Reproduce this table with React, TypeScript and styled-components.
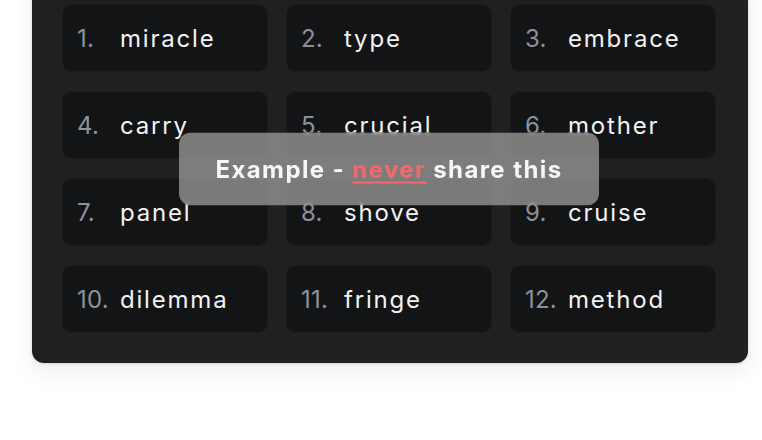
import styled, { createGlobalStyle } from 'styled-components';

const words = [
  'miracle',
  'type',
  'embrace',
  'carry',
  'crucial',
  'mother',
  'panel',
  'shove',
  'cruise',
  'dilemma',
  'fringe',
  'method',
];

const GlobalStyle = createGlobalStyle`
  body {
    margin: 0;
    background: #ffffff;
    font-family: Inter, "Liberation Sans", sans-serif;
    overflow: hidden;
  }
`;

const Page = styled.div`
  width: 762px;
  height: 440px;
  padding: 0 14px 0 32px;
  box-sizing: border-box;
`;

const Panel = styled.div`
  position: relative;
  margin-top: -26px;
  width: 716px;
  box-sizing: border-box;
  padding: 30px 32px 30px 30px;
  background: #1f2022;
  border-radius: 12px;
  box-shadow: 0 8px 24px rgba(0, 0, 0, 0.08), 0 1px 3px rgba(0, 0, 0, 0.12);
`;

const Grid = styled.div`
  position: relative;
  display: grid;
  grid-template-columns: repeat(3, 206px);
  column-gap: 18px;
  row-gap: 19px;
`;

const Card = styled.div`
  display: flex;
  align-items: center;
  height: 68px;
  box-sizing: border-box;
  padding: 0 14px;
  background: #131416;
  border: 1px solid #1a1b1d;
  border-radius: 10px;
  font-size: 24px;
`;

const Num = styled.span`
  width: 43px;
  flex-shrink: 0;
  color: #8e919c;
  letter-spacing: 0.2px;
`;

const Word = styled.span`
  color: #f2f2f3;
  letter-spacing: 1.8px;
`;

const Overlay = styled.div`
  position: absolute;
  left: 50%;
  top: 50%;
  transform: translate(-50%, -50%);
  width: 420px;
  height: 73px;
  display: flex;
  align-items: center;
  justify-content: center;
  background: rgba(155, 155, 155, 0.76);
  backdrop-filter: blur(1.5px);
  border-radius: 12px;
  font-size: 24px;
  font-weight: 700;
  color: #f7f7f7;
  letter-spacing: 1.4px;
`;

const Never = styled.span`
  color: #f5686e;
  text-decoration: underline;
  text-decoration-thickness: 2px;
  text-underline-offset: 4px;
`;

export default function App() {
  return (
    <Page>
      <GlobalStyle />
      <Panel>
        <Grid>
          {words.map((w, i) => (
            <Card key={w}>
              <Num>{i + 1}.</Num>
              <Word>{w}</Word>
            </Card>
          ))}
          <Overlay>
            Example -&nbsp;<Never>never</Never>&nbsp;share this
          </Overlay>
        </Grid>
      </Panel>
    </Page>
  );
}
